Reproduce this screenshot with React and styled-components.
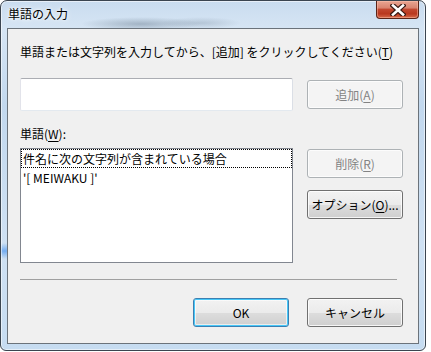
import React from 'react';
import styled, { createGlobalStyle } from 'styled-components';

const GlobalStyle = createGlobalStyle`
  html, body {
    margin: 0;
    padding: 0;
    background: #ffffff;
  }
  body {
    font-family: "Noto Sans CJK JP", "Noto Sans", sans-serif;
    font-size: 12px;
    color: #000;
  }
`;

const Window = styled.div`
  box-sizing: border-box;
  width: 426px;
  height: 351px;
  display: flex;
  flex-direction: column;
  padding: 0 6px 6px 6px;
  border: 1px solid #3b4550;
  border-radius: 7px 7px 6px 6px;
  box-shadow: inset 0 0 0 1px rgba(255, 255, 255, 0.55);
  background:
    radial-gradient(ellipse 60px 7px at 140px 23px, rgba(70, 90, 110, 0.35), transparent),
    radial-gradient(ellipse 40px 6px at 200px 22px, rgba(90, 110, 130, 0.25), transparent),
    radial-gradient(ellipse 30px 8px at 4px 250px, rgba(40, 130, 240, 0.55), transparent),
    linear-gradient(180deg, #c9dcef 0%, #d6e5f4 8%, #c2d8ee 30%, #cfe1f3 70%, #c6dcf1 100%);
`;

const TitleBar = styled.div`
  height: 27px;
  display: flex;
  align-items: flex-start;
  justify-content: space-between;
`;

const Title = styled.div`
  padding: 5px 0 0 1px;
  font-size: 12px;
  line-height: 16px;
  color: #000;
  text-shadow: 0 0 6px #fff, 0 0 3px #fff;
`;

const CloseButton = styled.div`
  box-sizing: border-box;
  width: 43px;
  height: 18px;
  display: flex;
  align-items: center;
  justify-content: center;
  border: 1px solid #5b2418;
  border-top: none;
  border-radius: 0 0 4px 4px;
  background: linear-gradient(180deg, #e9a592 0%, #d98470 40%, #c2472f 50%, #b9381f 75%, #d76a4b 100%);
  box-shadow: inset 0 0 0 1px rgba(255, 200, 180, 0.45);
`;

const Client = styled.div`
  flex: 1;
  box-sizing: border-box;
  border: 1px solid #6b737b;
  background: #f0f0f0;
  padding: 15px 15px 0 12px;
  display: flex;
  flex-direction: column;
`;

const Label = styled.div`
  line-height: 16px;
  height: 16px;
  margin-top: ${(p) => p.$top || 0}px;
  white-space: nowrap;
`;

const U = styled.span`
  text-decoration: underline;
  text-underline-offset: 2px;
`;

const Row = styled.div`
  display: flex;
  gap: 14px;
  align-items: ${(p) => p.$align || 'center'};
  margin-top: ${(p) => p.$top || 0}px;
`;

const TextBox = styled.div`
  box-sizing: border-box;
  width: 273px;
  height: 33px;
  background: #fff;
  border: 1px solid #e3e9ef;
  border-top-color: #abadb3;
  border-left-color: #e2e3ea;
  border-right-color: #dbdfe6;
  border-radius: 2px;
`;

const Button = styled.div`
  box-sizing: border-box;
  width: 96px;
  height: 29px;
  display: flex;
  align-items: center;
  justify-content: center;
  border-radius: 3px;
  white-space: nowrap;
  line-height: 16px;
  color: ${(p) => (p.$disabled ? '#838383' : '#000')};
  border: 1px solid ${(p) => (p.$disabled ? '#adb2b5' : p.$default ? '#3c7fb1' : '#707070')};
  background: ${(p) =>
    p.$disabled
      ? '#f4f4f4'
      : 'linear-gradient(180deg, #f2f2f2 0%, #ebebeb 50%, #dddddd 51%, #cfcfcf 100%)'};
  box-shadow: ${(p) =>
    p.$disabled
      ? 'inset 0 0 0 1px #fcfcfc'
      : p.$default
        ? 'inset 0 0 0 1px #48c8f8, inset 0 0 0 2px rgba(255,255,255,0.6)'
        : 'inset 0 0 0 1px rgba(255,255,255,0.8)'};
`;

const ListBox = styled.div`
  box-sizing: border-box;
  width: 273px;
  height: 115px;
  background: #fff;
  border: 1px solid #828790;
  padding: 0;
`;

const Item = styled.div`
  box-sizing: border-box;
  height: ${(p) => (p.$focused ? 19 : 17)}px;
  line-height: 17px;
  padding-left: 1px;
  border: 1px dotted ${(p) => (p.$focused ? '#000' : 'transparent')};
  white-space: nowrap;
`;

const SideButtons = styled.div`
  display: flex;
  flex-direction: column;
  gap: 12px;
  padding-top: 1px;
`;

const Separator = styled.div`
  width: 377px;
  height: 0;
  border-top: 1px solid #a0a0a0;
  margin-top: 16px;
`;

const ButtonRow = styled.div`
  display: flex;
  justify-content: flex-end;
  gap: 18px;
  margin-top: 18px;
`;

const CloseGlyph = () => (
  <svg width="16" height="12" viewBox="0 0 16 12">
    <path d="M3 1.5 L13 10.5 M13 1.5 L3 10.5" stroke="#3a1a14" strokeWidth="5" strokeLinecap="square" fill="none" />
    <path d="M3 1.5 L13 10.5 M13 1.5 L3 10.5" stroke="#ffffff" strokeWidth="2.6" strokeLinecap="square" fill="none" />
  </svg>
);

export default function App() {
  return (
    <>
      <GlobalStyle />
      <Window>
        <TitleBar>
          <Title>単語の入力</Title>
          <CloseButton>
            <CloseGlyph />
          </CloseButton>
        </TitleBar>
        <Client>
          <Label>
            単語または文字列を入力してから、[追加] をクリックしてください(<U>T</U>)
          </Label>
          <Row $top={18}>
            <TextBox />
            <Button $disabled>
              追加(<U>A</U>)
            </Button>
          </Row>
          <Label $top={15}>
            単語(<U>W</U>):
          </Label>
          <Row $top={6} $align="flex-start">
            <ListBox>
              <Item $focused>件名に次の文字列が含まれている場合</Item>
              <Item>'[ MEIWAKU ]'</Item>
            </ListBox>
            <SideButtons>
              <Button $disabled>
                削除(<U>R</U>)
              </Button>
              <Button>
                オプション(<U>O</U>)...
              </Button>
            </SideButtons>
          </Row>
          <Separator />
          <ButtonRow>
            <Button $default>OK</Button>
            <Button>キャンセル</Button>
          </ButtonRow>
        </Client>
      </Window>
    </>
  );
}
